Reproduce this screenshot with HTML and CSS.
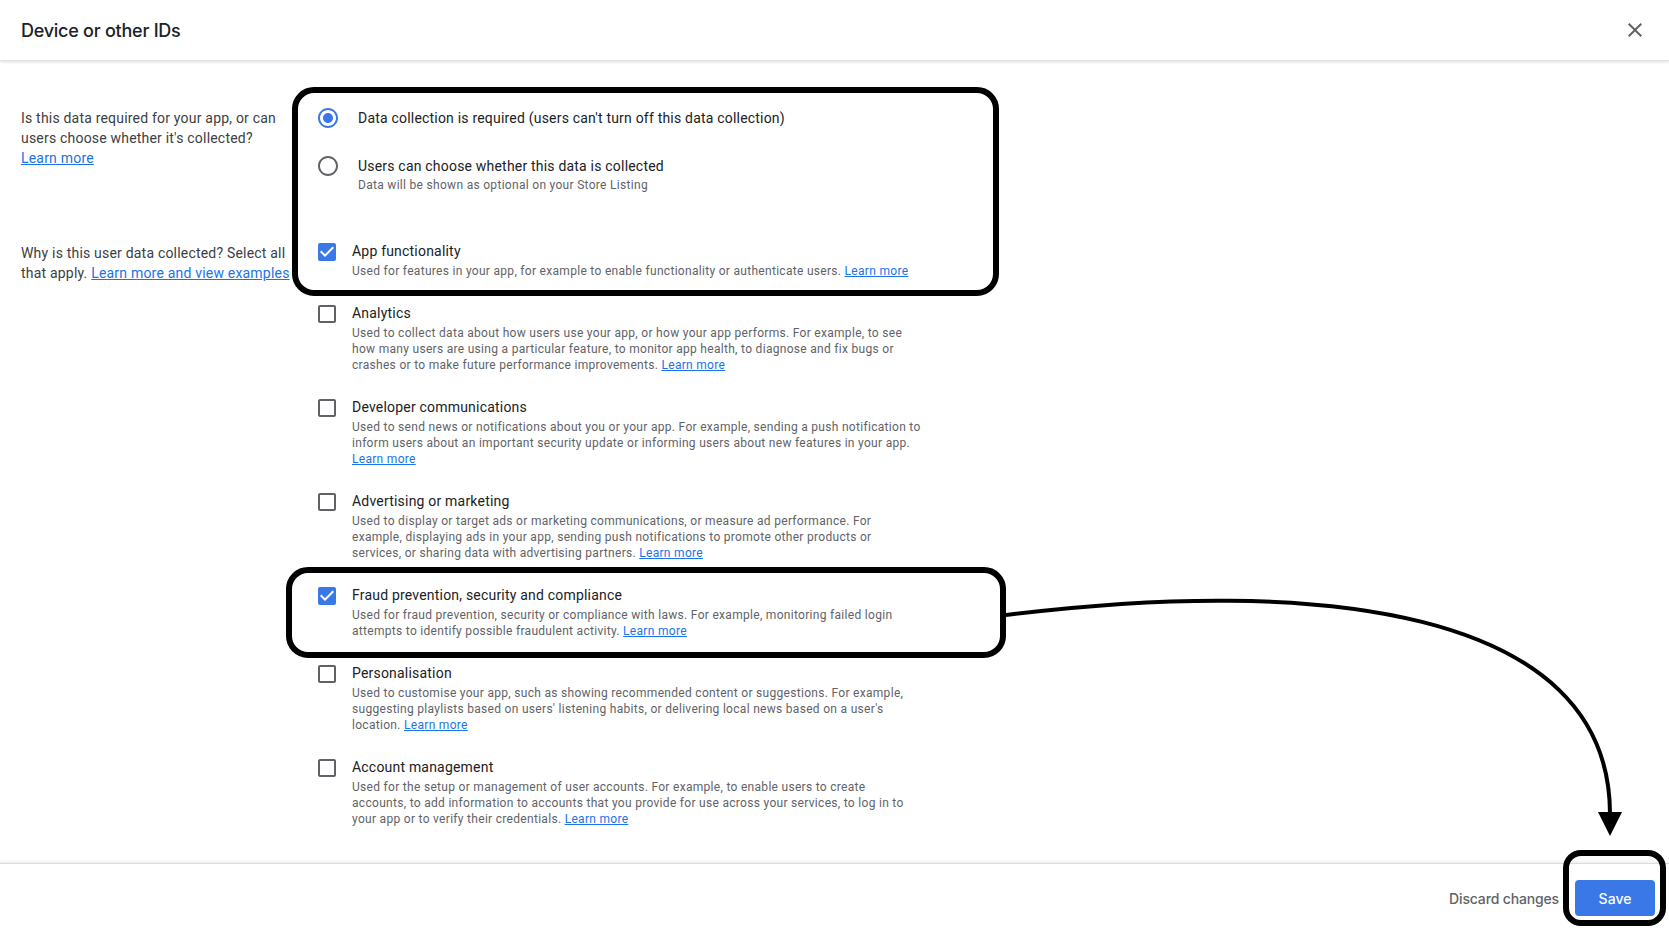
FILE: index.html
```html
<!DOCTYPE html>
<html lang="en">
<head>
<meta charset="utf-8">
<title>Device or other IDs</title>
<link rel="stylesheet" href="styles.css">
</head>
<body>
<div class="dialog">
  <header class="header">
    <h1 class="title">Device or other IDs</h1>
    <button class="close" aria-label="Close">
      <svg width="24" height="24" viewBox="0 0 24 24"><path d="M19 6.41L17.59 5 12 10.59 6.41 5 5 6.41 10.59 12 5 17.59 6.41 19 12 13.41 17.59 19 19 17.59 13.41 12z" fill="#5f6368"/></svg>
    </button>
  </header>

  <main class="content">
    <section class="row row-first">
      <div class="question">
        <div>Is this data required for your app, or can users choose whether it's collected?</div>
        <a href="#">Learn more</a>
      </div>
      <div class="options">
        <div class="radio-item">
          <svg class="radio" width="20" height="20" viewBox="2 2 20 20"><path d="M12 7c-2.76 0-5 2.24-5 5s2.24 5 5 5 5-2.24 5-5-2.24-5-5-5zm0-5C6.48 2 2 6.48 2 12s4.48 10 10 10 10-4.48 10-10S17.52 2 12 2zm0 18c-4.42 0-8-3.58-8-8s3.58-8 8-8 8 3.58 8 8-3.58 8-8 8z" fill="#3b78e7"/></svg>
          <div class="radio-text"><div class="label">Data collection is required (users can't turn off this data collection)</div></div>
        </div>
        <div class="radio-item radio-second">
          <svg class="radio" width="20" height="20" viewBox="2 2 20 20"><path d="M12 2C6.48 2 2 6.48 2 12s4.48 10 10 10 10-4.48 10-10S17.52 2 12 2zm0 18c-4.42 0-8-3.58-8-8s3.58-8 8-8 8 3.58 8 8-3.58 8-8 8z" fill="#5f6368"/></svg>
          <div class="radio-text">
            <div class="label">Users can choose whether this data is collected</div>
            <div class="desc desc-radio">Data will be shown as optional on your Store Listing</div>
          </div>
        </div>
      </div>
    </section>

    <section class="row row-second">
      <div class="question question-second">Why is this user data collected? Select all that apply. <a href="#">Learn more and view examples</a></div>
      <div class="options">
        <div class="check-item">
          <svg class="check" width="18" height="18" viewBox="3 3 18 18"><path d="M19 3H5c-1.11 0-2 .9-2 2v14c0 1.1.89 2 2 2h14c1.11 0 2-.9 2-2V5c0-1.1-.89-2-2-2zm-9 14l-5-5 1.41-1.41L10 14.17l7.59-7.59L19 8l-9 9z" fill="#3b78e7"/></svg>
          <div class="check-text">
            <div class="label">App functionality</div>
            <div class="desc">Used for features in your app, for example to enable functionality or authenticate users. <a href="#">Learn more</a></div>
          </div>
        </div>
        <div class="check-item">
          <svg class="check" width="18" height="18" viewBox="3 3 18 18"><path d="M19 5v14H5V5h14m0-2H5c-1.1 0-2 .9-2 2v14c0 1.1.9 2 2 2h14c1.1 0 2-.9 2-2V5c0-1.1-.9-2-2-2z" fill="#5f6368"/></svg>
          <div class="check-text">
            <div class="label">Analytics</div>
            <div class="desc">Used to collect data about how users use your app, or how your app performs. For example, to see how many users are using a particular feature, to monitor app health, to diagnose and fix bugs or crashes or to make future performance improvements. <a href="#">Learn more</a></div>
          </div>
        </div>
        <div class="check-item">
          <svg class="check" width="18" height="18" viewBox="3 3 18 18"><path d="M19 5v14H5V5h14m0-2H5c-1.1 0-2 .9-2 2v14c0 1.1.9 2 2 2h14c1.1 0 2-.9 2-2V5c0-1.1-.9-2-2-2z" fill="#5f6368"/></svg>
          <div class="check-text">
            <div class="label">Developer communications</div>
            <div class="desc">Used to send news or notifications about you or your app. For example, sending a push notification to inform users about an important security update or informing users about new features in your app. <a href="#">Learn more</a></div>
          </div>
        </div>
        <div class="check-item">
          <svg class="check" width="18" height="18" viewBox="3 3 18 18"><path d="M19 5v14H5V5h14m0-2H5c-1.1 0-2 .9-2 2v14c0 1.1.9 2 2 2h14c1.1 0 2-.9 2-2V5c0-1.1-.9-2-2-2z" fill="#5f6368"/></svg>
          <div class="check-text">
            <div class="label">Advertising or marketing</div>
            <div class="desc">Used to display or target ads or marketing communications, or measure ad performance. For example, displaying ads in your app, sending push notifications to promote other products or services, or sharing data with advertising partners. <a href="#">Learn more</a></div>
          </div>
        </div>
        <div class="check-item">
          <svg class="check" width="18" height="18" viewBox="3 3 18 18"><path d="M19 3H5c-1.11 0-2 .9-2 2v14c0 1.1.89 2 2 2h14c1.11 0 2-.9 2-2V5c0-1.1-.89-2-2-2zm-9 14l-5-5 1.41-1.41L10 14.17l7.59-7.59L19 8l-9 9z" fill="#3b78e7"/></svg>
          <div class="check-text">
            <div class="label">Fraud prevention, security and compliance</div>
            <div class="desc">Used for fraud prevention, security or compliance with laws. For example, monitoring failed login attempts to identify possible fraudulent activity. <a href="#">Learn more</a></div>
          </div>
        </div>
        <div class="check-item">
          <svg class="check" width="18" height="18" viewBox="3 3 18 18"><path d="M19 5v14H5V5h14m0-2H5c-1.1 0-2 .9-2 2v14c0 1.1.9 2 2 2h14c1.1 0 2-.9 2-2V5c0-1.1-.9-2-2-2z" fill="#5f6368"/></svg>
          <div class="check-text">
            <div class="label">Personalisation</div>
            <div class="desc">Used to customise your app, such as showing recommended content or suggestions. For example, suggesting playlists based on users' listening habits, or delivering local news based on a user's location. <a href="#">Learn more</a></div>
          </div>
        </div>
        <div class="check-item">
          <svg class="check" width="18" height="18" viewBox="3 3 18 18"><path d="M19 5v14H5V5h14m0-2H5c-1.1 0-2 .9-2 2v14c0 1.1.9 2 2 2h14c1.1 0 2-.9 2-2V5c0-1.1-.9-2-2-2z" fill="#5f6368"/></svg>
          <div class="check-text">
            <div class="label">Account management</div>
            <div class="desc">Used for the setup or management of user accounts. For example, to enable users to create accounts, to add information to accounts that you provide for use across your services, to log in to your app or to verify their credentials. <a href="#">Learn more</a></div>
          </div>
        </div>
      </div>
    </section>
  </main>

  <footer class="footer">
    <button class="btn-text">Discard changes</button>
    <button class="btn-primary">Save</button>
  </footer>
</div>

<div class="annot annot-box1"></div>
<div class="annot annot-box2"></div>
<div class="annot annot-box3"></div>
<svg class="annot-arrow" width="1669" height="928" viewBox="0 0 1669 928">
  <path d="M1006 615 C 1310 577, 1610 605, 1610 814" fill="none" stroke="#000" stroke-width="4"/>
  <polygon points="1598,812 1622,812 1610,836" fill="#000"/>
</svg>
</body>
</html>
```

FILE: styles.css
```css
* { box-sizing: border-box; }
html, body { margin: 0; padding: 0; }
body {
  position: relative;
  width: 1669px;
  height: 928px;
  overflow: hidden;
  background: #fff;
  font-family: Roboto, "Liberation Sans", sans-serif;
  color: #202124;
}
.dialog {
  display: flex;
  flex-direction: column;
  height: 928px;
}
.header {
  flex: 0 0 61px;
  display: flex;
  align-items: center;
  justify-content: space-between;
  padding: 0 22px 0 21px;
  border-bottom: 1px solid #e2e3e5;
  box-shadow: 0 1px 3px rgba(60, 64, 67, 0.18);
  position: relative;
  z-index: 1;
}
.title {
  margin: 0;
  font-family: Inter, Roboto, sans-serif;
  font-size: 18px;
  font-weight: 500;
  color: #202124;
  letter-spacing: -0.25px;
}
.close {
  width: 24px;
  height: 24px;
  padding: 0;
  border: 0;
  background: none;
  display: flex;
}
.content {
  flex: 1 1 auto;
  overflow: hidden;
  padding: 47px 0 0 21px;
}
.row {
  display: grid;
  grid-template-columns: 297px 1fr;
}
.row-second { margin-top: 48px; }
.question {
  width: 272px;
  font-size: 14px;
  line-height: 20px;
  letter-spacing: 0.2px;
  color: #3c4043;
}
.question-second { padding-top: 2px; }
a { color: #1a73e8; text-decoration: underline; }
.options { display: flex; flex-direction: column; }
.radio-item {
  display: flex;
  align-items: flex-start;
  gap: 20px;
}
.radio-second { margin-top: 28px; }
.radio { flex: 0 0 20px; }
.label {
  font-size: 14px;
  line-height: 20px;
  letter-spacing: 0.2px;
  color: #202124;
}
.desc {
  font-size: 12px;
  line-height: 16px;
  letter-spacing: 0.3px;
  color: #5f6368;
  max-width: 571px;
}
.desc-radio { padding-top: 1px; }
.check-text .desc { margin-top: 2px; }
.check-item {
  display: flex;
  align-items: flex-start;
  gap: 16px;
  margin-bottom: 24px;
}
.check { flex: 0 0 18px; margin-top: 2px; }
.footer {
  flex: 0 0 65px;
  display: flex;
  justify-content: flex-end;
  align-items: flex-start;
  padding: 16px 14px 0 0;
  border-top: 1px solid #dadce0;
  box-shadow: 0 -1px 3px rgba(60, 64, 67, 0.12);
  position: relative;
  z-index: 1;
  background: #fff;
}
.btn-text {
  height: 36px;
  padding: 0 8px;
  margin-right: 8px;
  border: 0;
  background: none;
  font-family: Inter, Roboto, sans-serif;
  font-size: 14px;
  font-weight: 500;
  letter-spacing: -0.15px;
  color: #5f6368;
}
.btn-primary {
  width: 80px;
  height: 36px;
  border: 0;
  border-radius: 4px;
  background: #3b78e7;
  color: #fff;
  font-family: Inter, Roboto, sans-serif;
  font-size: 14px;
  font-weight: 500;
}
.annot {
  position: absolute;
  border: 6px solid #000;
  border-radius: 22px;
  pointer-events: none;
  z-index: 5;
}
.annot-box1 { left: 292px; top: 87px; width: 707px; height: 209px; }
.annot-box2 { left: 286px; top: 567px; width: 720px; height: 91px; }
.annot-box3 { left: 1563px; top: 850px; width: 103px; height: 76px; border-radius: 18px; }
.annot-arrow {
  position: absolute;
  left: 0;
  top: 0;
  pointer-events: none;
  z-index: 5;
}
```
